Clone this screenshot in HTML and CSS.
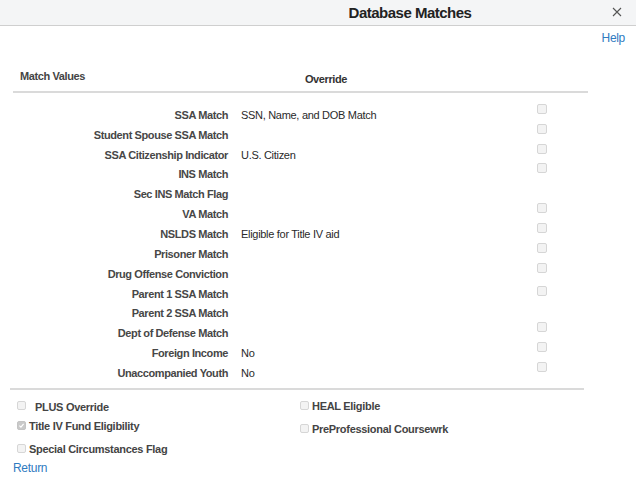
FILE: index.html
```html
<!DOCTYPE html>
<html lang="en">
<head>
  <meta charset="UTF-8">
  <title>Database Matches</title>
  <link rel="stylesheet" href="styles.css">
</head>
<body>
  <div class="header">
    <span class="title">Database Matches</span>
    <svg class="close" viewBox="0 0 10 10" width="10" height="10"><path d="M1 1 L9 9 M9 1 L1 9" stroke="#555" stroke-width="1.1" fill="none"/></svg>
  </div>

  <div class="help-row"><a href="#" class="link">Help</a></div>

  <div class="matches">
    <div class="matches-head">
      <span class="head-label">Match Values</span>
      <span class="head-override">Override</span>
    </div>
    <div class="matches-body">
      <div class="row"><span class="lbl">SSA Match</span><span class="val">SSN, Name, and DOB Match</span><span class="cb"></span></div>
      <div class="row"><span class="lbl">Student Spouse SSA Match</span><span class="val"></span><span class="cb"></span></div>
      <div class="row"><span class="lbl">SSA Citizenship Indicator</span><span class="val">U.S. Citizen</span><span class="cb"></span></div>
      <div class="row"><span class="lbl">INS Match</span><span class="val"></span><span class="cb"></span></div>
      <div class="row"><span class="lbl">Sec INS Match Flag</span><span class="val"></span></div>
      <div class="row"><span class="lbl">VA Match</span><span class="val"></span><span class="cb"></span></div>
      <div class="row"><span class="lbl">NSLDS Match</span><span class="val">Eligible for Title IV aid</span><span class="cb"></span></div>
      <div class="row"><span class="lbl">Prisoner Match</span><span class="val"></span><span class="cb"></span></div>
      <div class="row"><span class="lbl">Drug Offense Conviction</span><span class="val"></span><span class="cb"></span></div>
      <div class="row"><span class="lbl">Parent 1 SSA Match</span><span class="val"></span><span class="cb cb-low"></span></div>
      <div class="row"><span class="lbl">Parent 2 SSA Match</span><span class="val"></span></div>
      <div class="row"><span class="lbl">Dept of Defense Match</span><span class="val"></span><span class="cb"></span></div>
      <div class="row"><span class="lbl">Foreign Income</span><span class="val">No</span><span class="cb"></span></div>
      <div class="row"><span class="lbl">Unaccompanied Youth</span><span class="val">No</span><span class="cb"></span></div>
    </div>
  </div>

  <div class="flags">
    <div class="flags-col">
      <div class="flag flag-plus"><span class="cb"></span><span class="flag-lbl">PLUS Override</span></div>
      <div class="flag flag-title"><span class="cb cb-checked"><svg viewBox="0 0 10 10" width="9" height="9"><path d="M2 5.2 L4.2 7.3 L8 2.6" fill="none" stroke="#fff" stroke-width="1.6"/></svg></span><span class="flag-lbl">Title IV Fund Eligibility</span></div>
      <div class="flag flag-special"><span class="cb"></span><span class="flag-lbl">Special Circumstances Flag</span></div>
      <a href="#" class="link return">Return</a>
    </div>
    <div class="flags-col flags-right">
      <div class="flag flag-heal"><span class="cb"></span><span class="flag-lbl">HEAL Eligible</span></div>
      <div class="flag flag-pre"><span class="cb"></span><span class="flag-lbl">PreProfessional Coursewrk</span></div>
    </div>
  </div>
</body>
</html>
```

FILE: styles.css
```css
body {
  margin: 0;
  font-family: "Liberation Sans", Arial, sans-serif;
  color: #333;
  background: #fff;
  font-size: 11px;
}
.header {
  height: 25px;
  background: #f4f5f6;
  border-bottom: 1px solid #cfcfcf;
  display: flex;
  align-items: center;
  padding-left: 184px;
  justify-content: center;
  position: relative;
}
.title {
  font-size: 15px;
  font-weight: bold;
  color: #222;
  letter-spacing: -0.5px;
}
.close {
  position: absolute;
  right: 14px;
  top: 7px;
}
.link {
  color: #2f7bbf;
  text-decoration: none;
  font-size: 12px;
  letter-spacing: -0.3px;
}
.help-row {
  text-align: right;
  padding-right: 11px;
  margin-top: 5px;
  line-height: 14px;
}
.matches {
  margin-left: 13px;
  width: 575px;
}
.matches-head {
  height: 48px;
  box-sizing: border-box;
  padding-top: 24px;
  display: flex;
  align-items: flex-start;
  border-bottom: 2px solid #dadada;
  line-height: 14px;
  font-weight: bold;
  letter-spacing: -0.4px;
}
.head-label {
  padding-left: 7px;
  color: #444;
}
.head-override {
  margin-left: 220px;
  margin-top: 3px;
  color: #333;
}
.matches-body {
  padding: 12px 0 5px 3px;
  border-bottom: 2px solid #dadada;
  width: 571px;
  margin-left: -3px;
}
.row {
  height: 19.85px;
  display: flex;
  align-items: center;
}
.lbl {
  width: 215px;
  text-align: right;
  font-weight: bold;
  color: #474747;
  letter-spacing: -0.4px;
}
.val {
  width: 296px;
  margin-left: 13px;
  color: #2a2a2a;
  letter-spacing: -0.3px;
}
.cb {
  box-sizing: border-box;
  width: 10px;
  height: 10px;
  border: 1px solid #d6d6d6;
  border-radius: 2px;
  background: #f3f3f3;
  flex: none;
}
.row .cb {
  margin-bottom: 12px;
}
.row .cb-low {
  margin-bottom: 5px;
}
.cb-checked {
  background: #c9c9c9;
  border-color: #c4c4c4;
  display: flex;
  align-items: center;
  justify-content: center;
}
.flags {
  display: flex;
  margin-left: 13px;
}
.flags-col {
  width: 287px;
  display: flex;
  flex-direction: column;
}
.flag {
  display: flex;
  align-items: center;
  padding-left: 4px;
  height: 16px;
}
.flag .cb {
  width: 9px;
  height: 9px;
}
.flag-lbl {
  font-weight: bold;
  color: #444;
  margin-left: 3px;
  letter-spacing: -0.3px;
}
.flag-plus {
  margin-top: 9px;
}
.flag-plus .cb {
  margin-top: -3px;
}
.flag-plus .flag-lbl {
  margin-left: 9px;
}
.flag-title {
  margin-top: 3px;
}
.flag-special {
  margin-top: 7px;
}
.return {
  margin-top: 3px;
  line-height: 16px;
  align-self: flex-start;
}
.flags-right .flag {
  padding-left: 0;
}
.flag-heal {
  margin-top: 8px;
}
.flag-pre {
  margin-top: 7px;
}
```
